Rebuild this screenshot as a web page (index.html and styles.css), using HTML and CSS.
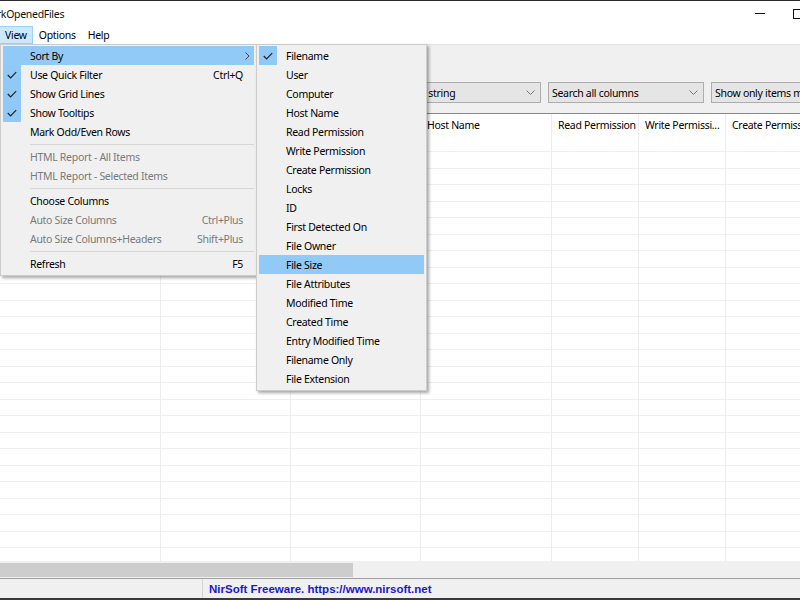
FILE: index.html
```html
<!DOCTYPE html>
<html>
<head>
<meta charset="utf-8">
<link rel="stylesheet" href="styles.css">
</head>
<body>
<div class="window">
  <div class="titlebar">
    <span class="title">NetworkOpenedFiles</span>
    <div class="captions">
      <div class="cap"><span class="cap-min"></span></div>
      <div class="cap"><span class="cap-max"></span></div>
      <div class="cap"></div>
    </div>
  </div>
  <div class="menubar">
    <span class="mb-item active">View</span>
    <span class="mb-item">Options</span>
    <span class="mb-item">Help</span>
  </div>
  <div class="toolbar"></div>
  <div class="filterbar">
    <div class="textbox"></div>
    <div class="combo c1"><span>Find a string</span><svg class="arrow" width="9" height="5" viewBox="0 0 9 5"><polyline points="0.5,0.5 4.5,4.5 8.5,0.5" fill="none" stroke="#777" stroke-width="1"/></svg></div>
    <div class="combo c2"><span>Search all columns</span><svg class="arrow" width="9" height="5" viewBox="0 0 9 5"><polyline points="0.5,0.5 4.5,4.5 8.5,0.5" fill="none" stroke="#777" stroke-width="1"/></svg></div>
    <div class="combo c3"><span>Show only items matching the string</span></div>
  </div>
  <div class="list">
    <div class="header">
      <div class="hcell w1">Filename</div>
      <div class="hcell w2">User</div>
      <div class="hcell w3">Computer</div>
      <div class="hcell w4">Host Name</div>
      <div class="hcell w5">Read Permission</div>
      <div class="hcell w6">Write Permissi...</div>
      <div class="hcell w7">Create Permiss...</div>
    </div>
    <div class="body">
      <div class="col w1"></div>
      <div class="col w2"></div>
      <div class="col w3"></div>
      <div class="col w4"></div>
      <div class="col w5"></div>
      <div class="col w6"></div>
      <div class="col w7"></div>
    </div>
  </div>
  <div class="hscroll"><div class="thumb"></div></div>
  <div class="statusbar">
    <div class="panel p1"></div>
    <div class="panel p2">NirSoft Freeware. https://www.nirsoft.net</div>
  </div>
</div>

<div class="menu view-menu">
  <div class="item hot"><span class="chk"></span><span class="lbl">Sort By</span><svg class="sub" width="5" height="8" viewBox="0 0 5 8"><polyline points="0.5,0.5 4,4 0.5,7.5" fill="none" stroke="#444" stroke-width="1"/></svg></div>
  <div class="item"><span class="chk on"><svg width="10" height="8" viewBox="0 0 10 8"><polyline points="0.8,4 3.6,6.8 9.2,1.2" fill="none" stroke="#222" stroke-width="1.2"/></svg></span><span class="lbl">Use Quick Filter</span><span class="key">Ctrl+Q</span></div>
  <div class="item"><span class="chk on"><svg width="10" height="8" viewBox="0 0 10 8"><polyline points="0.8,4 3.6,6.8 9.2,1.2" fill="none" stroke="#222" stroke-width="1.2"/></svg></span><span class="lbl">Show Grid Lines</span></div>
  <div class="item"><span class="chk on"><svg width="10" height="8" viewBox="0 0 10 8"><polyline points="0.8,4 3.6,6.8 9.2,1.2" fill="none" stroke="#222" stroke-width="1.2"/></svg></span><span class="lbl">Show Tooltips</span></div>
  <div class="item"><span class="chk"></span><span class="lbl">Mark Odd/Even Rows</span></div>
  <div class="sep"></div>
  <div class="item dis"><span class="chk"></span><span class="lbl">HTML Report - All Items</span></div>
  <div class="item dis"><span class="chk"></span><span class="lbl">HTML Report - Selected Items</span></div>
  <div class="sep"></div>
  <div class="item"><span class="chk"></span><span class="lbl">Choose Columns</span></div>
  <div class="item dis"><span class="chk"></span><span class="lbl">Auto Size Columns</span><span class="key">Ctrl+Plus</span></div>
  <div class="item dis"><span class="chk"></span><span class="lbl">Auto Size Columns+Headers</span><span class="key">Shift+Plus</span></div>
  <div class="sep"></div>
  <div class="item"><span class="chk"></span><span class="lbl">Refresh</span><span class="key">F5</span></div>
</div>

<div class="menu sort-menu">
  <div class="item"><span class="chk on"><svg width="10" height="8" viewBox="0 0 10 8"><polyline points="0.8,4 3.6,6.8 9.2,1.2" fill="none" stroke="#222" stroke-width="1.2"/></svg></span><span class="lbl">Filename</span></div>
  <div class="item"><span class="chk"></span><span class="lbl">User</span></div>
  <div class="item"><span class="chk"></span><span class="lbl">Computer</span></div>
  <div class="item"><span class="chk"></span><span class="lbl">Host Name</span></div>
  <div class="item"><span class="chk"></span><span class="lbl">Read Permission</span></div>
  <div class="item"><span class="chk"></span><span class="lbl">Write Permission</span></div>
  <div class="item"><span class="chk"></span><span class="lbl">Create Permission</span></div>
  <div class="item"><span class="chk"></span><span class="lbl">Locks</span></div>
  <div class="item"><span class="chk"></span><span class="lbl">ID</span></div>
  <div class="item"><span class="chk"></span><span class="lbl">First Detected On</span></div>
  <div class="item"><span class="chk"></span><span class="lbl">File Owner</span></div>
  <div class="item hot"><span class="chk"></span><span class="lbl">File Size</span></div>
  <div class="item"><span class="chk"></span><span class="lbl">File Attributes</span></div>
  <div class="item"><span class="chk"></span><span class="lbl">Modified Time</span></div>
  <div class="item"><span class="chk"></span><span class="lbl">Created Time</span></div>
  <div class="item"><span class="chk"></span><span class="lbl">Entry Modified Time</span></div>
  <div class="item"><span class="chk"></span><span class="lbl">Filename Only</span></div>
  <div class="item"><span class="chk"></span><span class="lbl">File Extension</span></div>
</div>
</body>
</html>
```

FILE: styles.css
```css
* { box-sizing: border-box; }
html, body {
  margin: 0;
  padding: 0;
  width: 800px;
  height: 600px;
  overflow: hidden;
  background: #f0f0f0;
  font-family: "Noto Sans", "Open Sans", sans-serif;
  font-size: 10.5px;
  letter-spacing: -0.3px;
  color: #000;
}
.window {
  width: 800px;
  height: 600px;
  display: flex;
  flex-direction: column;
  border-top: 1px solid #2b2b2b;
  border-bottom: 2px solid #3a3a3a;
  overflow: hidden;
}
.titlebar {
  height: 25px;
  flex: none;
  background: #fff;
  display: flex;
  align-items: center;
}
.title {
  font-size: 10.5px;
  margin-left: -34px;
  white-space: nowrap;
  letter-spacing: -0.3px;
  color: #111;
}
.captions {
  margin-left: auto;
  margin-right: -55px;
  display: flex;
  height: 100%;
}
.cap {
  width: 38px;
  height: 100%;
  display: flex;
  align-items: center;
  justify-content: center;
}
.cap-min {
  display: block;
  width: 10px;
  height: 1px;
  background: #111;
}
.cap-max {
  display: block;
  width: 10px;
  height: 10px;
  border: 1px solid #111;
}
.menubar {
  height: 18px;
  flex: none;
  background: #fff;
  display: flex;
  align-items: stretch;
}
.mb-item {
  padding: 0 5px;
  display: flex;
  align-items: center;
  border: 1px solid transparent;
}
.mb-item.active {
  background: #cce8ff;
  border-color: #99d1ff;
  padding-left: 5px;
  margin-left: -1px;
}
.toolbar {
  height: 37px;
  flex: none;
  background: #f0f0f0;
  border-top: 1px solid #e2e2e2;
}
.filterbar {
  height: 32px;
  flex: none;
  display: flex;
  align-items: flex-start;
  gap: 7px;
  padding-top: 1px;
}
.textbox {
  width: 387px;
  height: 21px;
  background: #fff;
  border: 1px solid #7a7a7a;
  flex: none;
}
.combo {
  height: 21px;
  flex: none;
  background: #e5e5e5;
  border: 1px solid #adadad;
  display: flex;
  align-items: center;
  padding: 0 3px;
  white-space: nowrap;
  overflow: hidden;
}
.combo span { flex: 1; overflow: hidden; }
.combo .arrow { flex: none; margin-right: 2px; }
.c1 { width: 147px; }
.c2 { width: 156px; }
.c3 { width: 160px; }
.list {
  flex: 1;
  min-height: 0;
  display: flex;
  flex-direction: column;
  background: #fff;
  border-top: 1px solid #828790;
  overflow: hidden;
}
.header {
  display: flex;
  height: 22px;
  flex: none;
  background: #fff;
}
.hcell {
  flex: none;
  padding-left: 6px;
  display: flex;
  align-items: center;
  white-space: nowrap;
  overflow: hidden;
  border-right: 1px solid #ececec;
}
.body {
  flex: 1;
  display: flex;
  background-image: repeating-linear-gradient(to bottom, transparent 0, transparent 15.5px, #efefef 15.5px, #efefef 16.5px);
}
.col {
  flex: none;
  border-right: 1px solid #ececec;
}
.w1 { width: 161px; }
.w2 { width: 130px; }
.w3 { width: 130px; }
.w4 { width: 131px; }
.w5 { width: 87px; }
.w6 { width: 87px; }
.w7 { width: 120px; }
.hscroll {
  height: 17px;
  flex: none;
  background: #f0f0f0;
  padding: 2px 0 1px 0;
  display: flex;
}
.thumb {
  width: 353px;
  height: 100%;
  background: #cdcdcd;
}
.statusbar {
  height: 20px;
  flex: none;
  display: flex;
  background: #f0f0f0;
  border-top: 1px solid #a0a0a0;
}
.panel {
  height: 100%;
  display: flex;
  align-items: center;
}
.p1 {
  width: 203px;
  border-right: 1px solid #d5d5d5;
}
.p2 {
  padding-left: 6px;
  font-family: "Liberation Sans", Arial, sans-serif;
  font-weight: bold;
  font-size: 11.5px;
  letter-spacing: 0;
  color: #1a1ac8;
}

/* popup menus */
.menu {
  position: absolute;
  top: 44px;
  background: #f0f0f0;
  border: 1px solid #cccccc;
  padding: 1px 2px 2px 2px;
  box-shadow: 2px 2px 3px rgba(0, 0, 0, 0.35);
}
.view-menu {
  left: 0;
  width: 257px;
}
.sort-menu {
  left: 256px;
  width: 171px;
}
.item {
  height: 19px;
  display: flex;
  align-items: center;
  white-space: nowrap;
}
.item.hot { background: #91c9f7; }
.item.dis { color: #7a7a7a; }
.chk {
  width: 18px;
  height: 19px;
  flex: none;
  display: flex;
  align-items: center;
  justify-content: center;
}
.chk.on { background: #90c8f6; }
.lbl {
  flex: 1;
  padding-left: 9px;
}
.key {
  padding-right: 11px;
}
.sub {
  margin-right: 4px;
}
.sep {
  height: 6px;
  display: flex;
  align-items: center;
  margin-left: 27px;
}
.sep::after {
  content: "";
  display: block;
  width: 100%;
  height: 1px;
  background: #d7d7d7;
}
```
